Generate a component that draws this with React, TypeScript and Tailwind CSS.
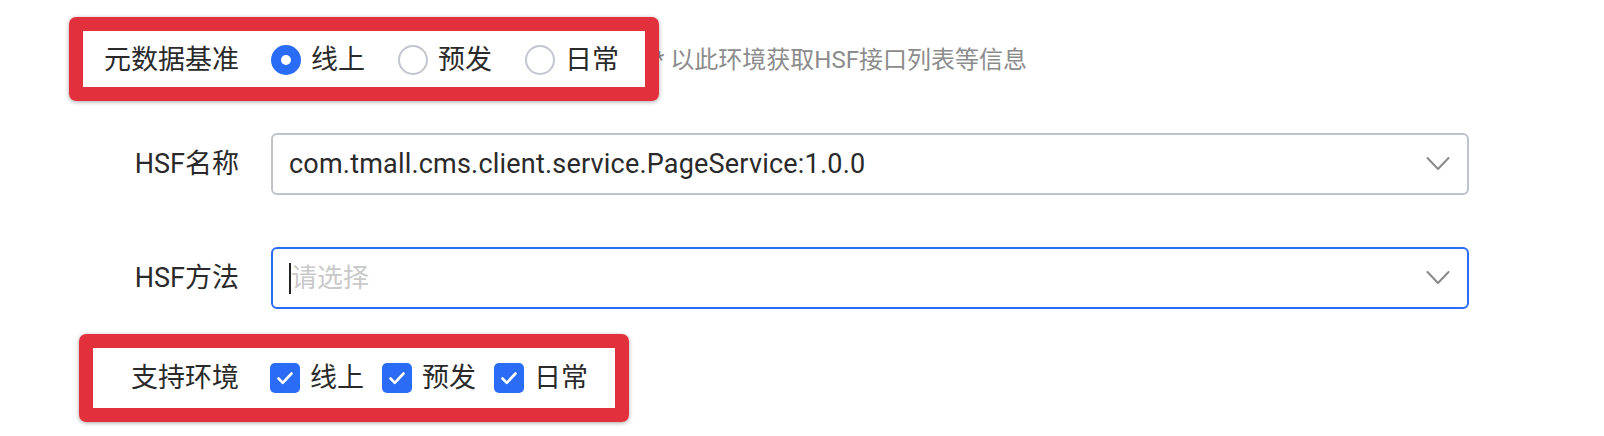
const ENVS = ["线上", "预发", "日常"];

const Radio = ({ checked, label }: { checked?: boolean; label: string }) => (
  <label className="flex items-center gap-[10px]">
    {checked ? (
      <span className="flex h-[30px] w-[30px] items-center justify-center rounded-full bg-[#2a6cf6]">
        <span className="h-[10px] w-[10px] rounded-full bg-white" />
      </span>
    ) : (
      <span className="h-[30px] w-[30px] rounded-full border-2 border-[#c3c5cf] bg-white" />
    )}
    <span>{label}</span>
  </label>
);

const Checkbox = ({ label }: { label: string }) => (
  <label className="flex items-center gap-[10px]">
    <span className="flex h-[30px] w-[30px] items-center justify-center rounded-[5px] bg-[#2a6cf6]">
      <svg width="30" height="30" viewBox="0 0 30 30" fill="none">
        <path d="M8.5 15.5l4.3 4.3L21.5 10.5" stroke="white" strokeWidth="2.6" strokeLinecap="round" strokeLinejoin="round" />
      </svg>
    </span>
    <span>{label}</span>
  </label>
);

const Chevron = () => (
  <svg width="24" height="16" viewBox="0 0 24 16" fill="none" className="shrink-0">
    <path d="M1.5 2l10.5 11L22.5 2" stroke="#8a8a8a" strokeWidth="2" strokeLinecap="round" strokeLinejoin="round" />
  </svg>
);

const Label = ({ children }: { children: React.ReactNode }) => (
  <div className="w-[239px] shrink-0 text-right">{children}</div>
);

export default function App() {
  return (
    <div
      className="min-h-[436px] w-[1604px] bg-white pt-[29px] text-[27px] leading-none text-[#2a2a2a]"
      style={{ fontFamily: "Roboto, 'Noto Sans CJK SC', sans-serif" }}
    >
      {/* 元数据基准 */}
      <div className="relative flex h-[62px] items-center">
        <Label>元数据基准</Label>
        <div className="ml-[32px] flex items-center gap-[33px]">
          <Radio checked label="线上" />
          <Radio label="预发" />
          <Radio label="日常" />
        </div>
        <span className="ml-[35px] text-[24px] text-[#8c8c8c]">* 以此环境获取HSF接口列表等信息</span>
        <div className="absolute left-[69px] top-[-12px] h-[84px] w-[590px] rounded-[7px] border-[14px] border-[#e3303d] shadow-[0_1px_4px_rgba(0,0,0,0.35)]" />
      </div>

      {/* HSF名称 */}
      <div className="mt-[42px] flex h-[62px] items-center">
        <Label>HSF名称</Label>
        <div className="ml-[32px] flex h-[62px] w-[1198px] items-center justify-between rounded-[6px] border-2 border-[#c0c2cc] pl-[16px] pr-[17px]">
          <span className="text-[27px] tracking-[0.2px]">com.tmall.cms.client.service.PageService:1.0.0</span>
          <Chevron />
        </div>
      </div>

      {/* HSF方法 */}
      <div className="mt-[52px] flex h-[62px] items-center">
        <Label>HSF方法</Label>
        <div className="ml-[32px] flex h-[62px] w-[1198px] items-center justify-between rounded-[6px] border-2 border-[#2a6cf6] pl-[16px] pr-[17px]">
          <div className="flex items-center">
            <span className="h-[31px] w-[2px] bg-[#222]" />
            <span className="text-[26px] text-[#c9c9c9]">请选择</span>
          </div>
          <Chevron />
        </div>
      </div>

      {/* 支持环境 */}
      <div className="relative mt-[38px] flex h-[62px] items-center">
        <Label>支持环境</Label>
        <div className="ml-[31px] flex items-center gap-[18px]">
          {ENVS.map((e) => (
            <Checkbox key={e} label={e} />
          ))}
        </div>
        <div className="absolute left-[79px] top-[-13px] h-[88px] w-[550px] rounded-[7px] border-[14px] border-[#e3303d] shadow-[0_1px_4px_rgba(0,0,0,0.35)]" />
      </div>
    </div>
  );
}
